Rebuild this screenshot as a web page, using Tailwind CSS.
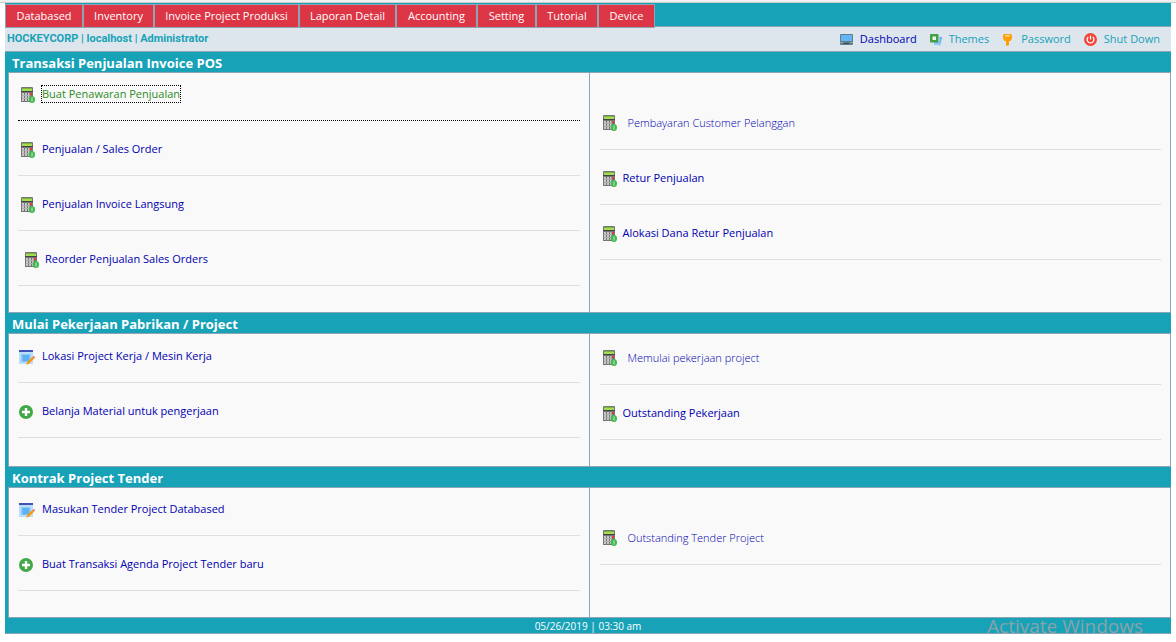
<!DOCTYPE html>
<html lang="id">
<head>
<meta charset="utf-8">
<title>HOCKEYCORP - Dashboard</title>
<script src="https://cdn.jsdelivr.net/npm/@tailwindcss/browser@4"></script>
</head>
<body class="bg-white font-['Open_Sans','Noto_Sans',sans-serif] text-[11px] text-[#0000b0]">
<svg class="hidden" aria-hidden="true">
  <symbol id="calc" viewBox="0 0 14 16">
    <path d="M0 1Q0 0 1 0H11Q12 0 12 1V15H0Z" fill="#757575"/>
    <rect x="0" y="4" width="12" height="1" fill="#444"/>
    <rect x="1" y="1" width="10" height="1" fill="#7cb342"/>
    <rect x="1" y="2" width="10" height="2" fill="#a4dc52"/>
    <path d="M1 6h2v8H1zM4 6h2v8H4zM7 6h1.500v8H7z" fill="#c8c8c8"/>
    <path d="M1 8.500h8M1 11.500h8" stroke="#b0b0b0" stroke-width="1"/>
    <rect x="9" y="6" width="2" height="2" fill="#e53935"/>
    <ellipse cx="10.900" cy="12.500" rx="3.100" ry="3.500" fill="#43b850"/>
    <path d="M11 10.500v4" stroke="#b9efb9" stroke-width="1" fill="none"/>
  </symbol>
  <symbol id="edit" viewBox="0 0 16 15">
    <rect x="0" y="0" width="14" height="14" fill="#bbdefb"/>
    <rect x="0" y="0" width="14" height="2" fill="#3f51b5"/>
    <rect x="2" y="4" width="9.500" height="8" fill="#90caf9"/>
    <rect x="3.500" y="5" width="7" height="6.500" fill="#5fb0f5"/>
    <path d="M7.300 14.800l1-2.700 5-5 1.700 1.700-5 5z" fill="#ff9800"/>
    <path d="M13.300 7.100l1-.9q.8-.3 1.300.3t.2 1.400l-.8.900z" fill="#e57373"/>
  </symbol>
  <symbol id="plus" viewBox="0 0 14 14">
    <circle cx="7" cy="7" r="7" fill="#43a847"/>
    <path d="M5.800 3h2.400v2.800H11v2.400H8.200V11H5.800V8.200H3V5.800h2.800z" fill="#fff"/>
  </symbol>
</svg>

<div class="h-[3px] border-b border-[#cccccc] bg-[#f0f0f0]"></div>

<div class="mx-[5px] bg-[#17a2b8]">
  <nav class="flex h-6 items-start border-b border-[#8ca5b5] pt-px" aria-label="Menu">
    <button class="h-6 w-[78px] shrink-0 border border-[#8ca5b5] bg-[#dc3545] pt-px text-white">Databased</button>
    <button class="h-6 w-[71px] shrink-0 border border-[#8ca5b5] bg-[#dc3545] pt-px text-white">Inventory</button>
    <button class="h-6 w-[145px] shrink-0 border border-[#8ca5b5] bg-[#dc3545] pt-px text-white">Invoice Project Produksi</button>
    <button class="h-6 w-[97px] shrink-0 border border-[#8ca5b5] bg-[#dc3545] pt-px text-white">Laporan Detail</button>
    <button class="h-6 w-[81px] shrink-0 border border-[#8ca5b5] bg-[#dc3545] pt-px text-white">Accounting</button>
    <button class="h-6 w-[59px] shrink-0 border border-[#8ca5b5] bg-[#dc3545] pt-px text-white">Setting</button>
    <button class="h-6 w-[62px] shrink-0 border border-[#8ca5b5] bg-[#dc3545] pt-px text-white">Tutorial</button>
    <button class="h-6 w-[57px] shrink-0 border border-[#8ca5b5] bg-[#dc3545] pt-px text-white">Device</button>
  </nav>

  <div class="flex h-[25px] items-center justify-between border-b border-[#8ca5b5] bg-[#dee6ed] pr-[11px] pl-[2px] text-[#17a2b8]">
    <span class="pt-px font-['Roboto',sans-serif] font-bold">HOCKEYCORP | localhost | Administrator</span>
    <div class="flex items-center gap-[13px]">
      <a href="#" class="flex items-center gap-[6px] text-[#0000b0]">
        <svg class="mt-px h-[11px] w-[14px]" viewBox="0 0 14 11"><rect y="0" width="13" height="11" rx="1" fill="#607d8b"/><rect x="1" y="1" width="11" height="6" fill="#64b5f6"/><path d="M0 8.500h3M10 8.500h3" stroke="#90a4ae"/><path d="M4 9.500h5" stroke="#37474f"/></svg>Dashboard</a>
      <a href="#" class="flex items-center gap-[6px]">
        <svg class="mt-px h-3 w-[13px]" viewBox="0 0 13 12"><path d="M9.500 2.500l2.800.8-2.200 8.200-6-1.500.5-2h4.900z" fill="#64b5f6"/><path d="M9 3v6H4v2h6z" fill="#90caf9"/><rect width="8.500" height="8.500" rx=".8" fill="#43a047"/><rect x="2.500" y="2.500" width="3.500" height="3.500" fill="#e8f5e9"/></svg>Themes</a>
      <a href="#" class="flex items-center gap-[8px]">
        <svg class="mt-px h-3 w-[11px]" viewBox="0 0 11 12"><path d="M2 0h7l1 1.500v3L8.500 7H7v4l-1.500 1L4 11V7H2.500L1 4.500v-3z" fill="#ffa000"/><rect x="3.300" y="1.200" width="4.400" height="1.200" rx=".5" fill="#fff3e0"/></svg>Password</a>
      <a href="#" class="flex items-center gap-[7px]">
        <svg class="mt-px size-[13px]" viewBox="0 0 13 13"><circle cx="6.500" cy="6.500" r="6.500" fill="#f44336"/><path d="M4.200 4a3.400 3.400 0 1 0 4.600 0" fill="none" stroke="#fff" stroke-width="1.300"/><path d="M6.500 2.500v4" stroke="#fff" stroke-width="1.300"/></svg>Shut Down</a>
    </div>
  </div>

  <main class="pl-[3px]">
    <section>
      <h2 class="flex h-5 items-center pt-px pl-1 text-[13px] leading-4 font-bold text-white">Transaksi Penjualan Invoice POS</h2>
      <div class="grid grid-cols-2 border border-[#8ca5b5] bg-[#f9f9f9]">
        <ul class="border-r border-[#8ca5b5] pr-[9px] pb-[26px] pl-[9px]">
          <li class="flex h-12 items-end border-b border-dotted border-black pb-[18px] pl-[3px]"><svg class="mr-[7px] h-4 w-[14px] translate-y-px"><use href="#calc"/></svg><a href="#" class="leading-4 text-[#2e8b1e] outline-1 outline-black outline-dotted">Buat Penawaran Penjualan</a></li>
          <li class="flex h-[55px] items-end border-b border-[#dedede] pb-[18px] pl-[3px]"><svg class="mr-[7px] h-4 w-[14px] translate-y-px"><use href="#calc"/></svg><a href="#" class="leading-4">Penjualan / Sales Order</a></li>
          <li class="flex h-[55px] items-end border-b border-[#dedede] pb-[18px] pl-[3px]"><svg class="mr-[7px] h-4 w-[14px] translate-y-px"><use href="#calc"/></svg><a href="#" class="leading-4">Penjualan Invoice Langsung</a></li>
          <li class="flex h-[55px] items-end border-b border-[#dedede] pb-[18px] pl-[7px]"><svg class="mr-[6px] h-4 w-[14px] translate-y-px"><use href="#calc"/></svg><a href="#" class="leading-4">Reorder Penjualan Sales Orders</a></li>
        </ul>
        <ul class="pr-[9px] pl-[10px]">
          <li class="flex h-[77px] items-end border-b border-[#dedede] pb-[18px] pl-[3px]"><svg class="mr-[11px] h-4 w-[14px]"><use href="#calc"/></svg><a href="#" class="leading-4 font-light">Pembayaran Customer Pelanggan</a></li>
          <li class="flex h-[55px] items-end border-b border-[#dedede] pb-[18px] pl-[3px]"><svg class="mr-[6px] h-4 w-[14px] translate-y-px"><use href="#calc"/></svg><a href="#" class="leading-4">Retur Penjualan</a></li>
          <li class="flex h-[55px] items-end border-b border-[#dedede] pb-[18px] pl-[3px]"><svg class="mr-[6px] h-4 w-[14px] translate-y-px"><use href="#calc"/></svg><a href="#" class="leading-4">Alokasi Dana Retur Penjualan</a></li>
        </ul>
      </div>
    </section>

    <section>
      <h2 class="flex h-5 items-center pt-px pl-1 text-[13px] leading-4 font-bold text-white">Mulai Pekerjaan Pabrikan / Project</h2>
      <div class="grid grid-cols-2 border border-[#8ca5b5] bg-[#f9f9f9]">
        <ul class="border-r border-[#8ca5b5] pr-[9px] pb-[28px] pl-[9px]">
          <li class="flex h-[49px] items-end border-b border-[#dedede] pb-[18px] pl-px"><svg class="mr-[7px] h-[15px] w-4 translate-y-px"><use href="#edit"/></svg><a href="#" class="leading-4">Lokasi Project Kerja / Mesin Kerja</a></li>
          <li class="flex h-[55px] items-end border-b border-[#dedede] pb-[18px] pl-px"><svg class="mr-[9px] size-[14px]"><use href="#plus"/></svg><a href="#" class="leading-4">Belanja Material untuk pengerjaan</a></li>
        </ul>
        <ul class="pr-[9px] pl-[10px]">
          <li class="flex h-[51px] items-end border-b border-[#dedede] pb-[18px] pl-[3px]"><svg class="mr-[11px] h-4 w-[14px]"><use href="#calc"/></svg><a href="#" class="leading-4 font-light">Memulai pekerjaan project</a></li>
          <li class="flex h-[55px] items-end border-b border-[#dedede] pb-[18px] pl-[3px]"><svg class="mr-[6px] h-4 w-[14px] translate-y-px"><use href="#calc"/></svg><a href="#" class="leading-4">Outstanding Pekerjaan</a></li>
        </ul>
      </div>
    </section>

    <section>
      <h2 class="flex h-5 items-center pt-px pl-1 text-[13px] leading-4 font-bold text-white">Kontrak Project Tender</h2>
      <div class="grid grid-cols-2 border border-[#8ca5b5] bg-[#f9f9f9]">
        <ul class="border-r border-[#8ca5b5] pr-[9px] pb-[26px] pl-[9px]">
          <li class="flex h-12 items-end border-b border-[#dedede] pb-[18px] pl-px"><svg class="mr-[7px] h-[15px] w-4 translate-y-px"><use href="#edit"/></svg><a href="#" class="leading-4">Masukan Tender Project Databased</a></li>
          <li class="flex h-[55px] items-end border-b border-[#dedede] pb-[18px] pl-px"><svg class="mr-[9px] size-[14px]"><use href="#plus"/></svg><a href="#" class="leading-4">Buat Transaksi Agenda Project Tender baru</a></li>
        </ul>
        <ul class="pr-[9px] pl-[10px]">
          <li class="flex h-[77px] items-end border-b border-[#dedede] pb-[18px] pl-[3px]"><svg class="mr-[11px] h-4 w-[14px]"><use href="#calc"/></svg><a href="#" class="leading-4 font-light">Outstanding Tender Project</a></li>
        </ul>
      </div>
    </section>
  </main>

  <footer class="relative h-4 border-b border-[#8ca5b5] text-center text-[10px] leading-4 text-white">
    05/26/2019 | 03:30 am
    <span class="absolute -top-1 right-7 text-[19px] leading-6 text-[#8aa3a8]" aria-hidden="true">Activate Windows</span>
  </footer>
</div>
</body>
</html>
